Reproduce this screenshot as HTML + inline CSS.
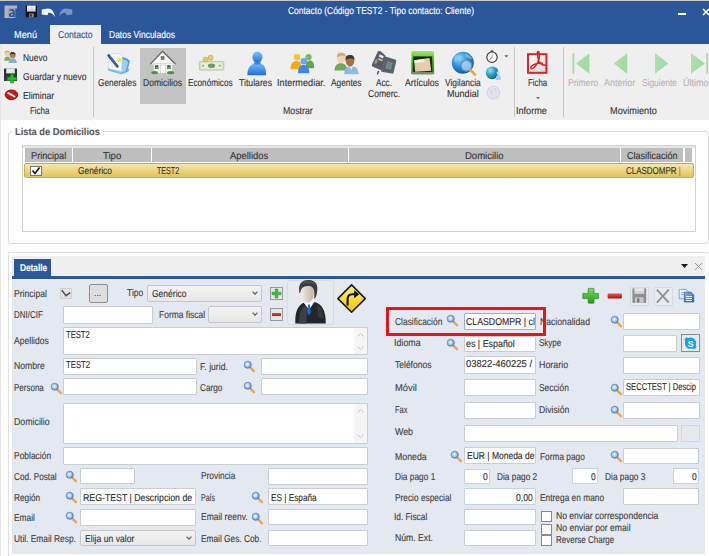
<!DOCTYPE html><html><head><meta charset="utf-8"><style>
html,body{margin:0;padding:0}
body{width:709px;height:556px;position:relative;overflow:hidden;background:#fff;font-family:'Liberation Sans',sans-serif}
.t{position:absolute;white-space:nowrap;line-height:10px;font-family:"Liberation Sans",sans-serif;transform-origin:0 0;-webkit-text-stroke:0.12px currentColor;text-rendering:geometricPrecision}
.b{position:absolute}
</style></head><body>
<div class="b" style="left:0px;top:0px;width:709px;height:1px;background:#c9c9c9"></div>
<div class="b" style="left:0px;top:1px;width:709px;height:43px;background:#2b579a"></div>
<svg class="b" style="left:0;top:0" width="80" height="24" viewBox="0 0 80 24">
<defs><linearGradient id="gFl" x1="0" y1="0" x2="0" y2="1"><stop offset="0" stop-color="#f4f4fc"/><stop offset="1" stop-color="#c8c8dc"/></linearGradient></defs>
<path d="M4.5 5.4 H17 V8.4 H8.8 V18.1 H4.5Z" fill="#b4b4b4"/>
<path d="M8.8 8.4 H15.2 V18.1 H8.8Z" fill="#b4b4b4"/>
<path d="M9.4 9.6 C10.6 8.6 13.6 8.6 14.4 10.2 C14.9 11.2 14.8 12.6 14.8 17.2 H12.6 V16.4 C11.8 17.4 9 17.6 8.9 15 C8.8 12.8 11 12.4 12.6 12.4 V11.6 C12.4 10.6 11 10.6 9.6 11.6Z" fill="#2b579a"/>
<path d="M11 14.9 C11 14 11.8 13.8 12.6 13.8 V15.2 C12.2 15.9 11 15.9 11 14.9Z" fill="#b4b4b4"/>
<rect x="25.7" y="5.4" width="11.3" height="11.9" rx="0.5" fill="#141414"/>
<rect x="27" y="5.6" width="8.6" height="6" fill="url(#gFl)"/>
<rect x="29.2" y="13.4" width="4.6" height="3.9" fill="#8a8a8a"/><rect x="30.2" y="13.8" width="1.6" height="3" fill="#303030"/>
<path d="M41.8 9.4 L47.6 8.4 C51.6 8.2 54.6 11.6 54.9 17.2 C53.4 14.2 51.2 12.6 48.2 12.8 L47.6 15.2 L41.7 14.6 Z" fill="#f4f4f4"/>
<path d="M72.2 9.4 L66.4 8.4 C62.4 8.2 59.6 11.6 59.3 16.2 C60.8 13.8 63 12.6 65.8 12.8 L66.4 15.2 L72.3 14.6 Z" fill="#7894c4"/>
</svg>
<div class="t" style="left:287.90px;top:7px;font-size:10px;color:#fff;font-weight:normal;transform:scaleX(0.8459);">Contacto (Código TEST2 - Tipo contacto: Cliente)</div>
<div class="b" style="left:678px;top:13px;width:8px;height:2px;background:#fff"></div>
<svg class="b" style="left:702px;top:8px" width="7" height="8" viewBox="0 0 7 8"><path d="M1 1L7 7M7 1L1 7" stroke="#fff" stroke-width="1.6"/></svg>
<div class="t" style="left:14.00px;top:31px;font-size:10px;color:#fff;font-weight:normal;transform:scaleX(0.9200);">Menú</div>
<div class="b" style="left:50px;top:25px;width:51px;height:19px;background:#efefef"></div>
<div class="t" style="left:58.30px;top:31px;font-size:10px;color:#2b579a;font-weight:normal;transform:scaleX(0.8625);">Contacto</div>
<div class="t" style="left:108.60px;top:31px;font-size:10px;color:#fff;font-weight:normal;transform:scaleX(0.8487);">Datos Vinculados</div>
<div class="b" style="left:0px;top:44px;width:709px;height:76px;background:#efefef"></div>
<div class="b" style="left:93px;top:47px;width:1px;height:70px;background:#c6c6c6"></div>
<div class="b" style="left:514px;top:47px;width:1px;height:70px;background:#c6c6c6"></div>
<div class="b" style="left:563px;top:47px;width:1px;height:70px;background:#c6c6c6"></div>
<div class="t" style="left:22.60px;top:54px;font-size:10px;color:#333;font-weight:normal;transform:scaleX(0.8414);">Nuevo</div>
<div class="t" style="left:22.60px;top:73px;font-size:10px;color:#333;font-weight:normal;transform:scaleX(0.8533);">Guardar y nuevo</div>
<div class="t" style="left:22.60px;top:92px;font-size:10px;color:#333;font-weight:normal;transform:scaleX(0.8639);">Eliminar</div>
<div class="t" style="left:29.60px;top:107px;font-size:10px;color:#333;font-weight:normal;transform:scaleX(0.7920);">Ficha</div>
<div class="b" style="left:140px;top:48px;width:46px;height:56px;background:#c3c3c3"></div>
<div class="t" style="left:97.80px;top:79px;font-size:10px;color:#333;font-weight:normal;transform:scaleX(0.8304);">Generales</div>
<div class="t" style="left:142.60px;top:79px;font-size:10px;color:#333;font-weight:normal;transform:scaleX(0.8565);">Domicilios</div>
<div class="t" style="left:188.00px;top:79px;font-size:10px;color:#333;font-weight:normal;transform:scaleX(0.8182);">Económicos</div>
<div class="t" style="left:239.00px;top:79px;font-size:10px;color:#333;font-weight:normal;transform:scaleX(0.8684);">Titulares</div>
<div class="t" style="left:277.08px;top:79px;font-size:10px;color:#333;font-weight:normal;transform:scaleX(0.9157);">Intermediar.</div>
<div class="t" style="left:330.70px;top:79px;font-size:10px;color:#333;font-weight:normal;transform:scaleX(0.8297);">Agentes</div>
<div class="t" style="left:375.90px;top:79px;font-size:10px;color:#333;font-weight:normal;transform:scaleX(0.8211);">Acc.</div>
<div class="t" style="left:367.80px;top:90px;font-size:10px;color:#333;font-weight:normal;transform:scaleX(0.8514);">Comerc.</div>
<div class="t" style="left:405.00px;top:79px;font-size:10px;color:#333;font-weight:normal;transform:scaleX(0.8718);">Artículos</div>
<div class="t" style="left:444.50px;top:79px;font-size:10px;color:#333;font-weight:normal;transform:scaleX(0.8372);">Vigilancia</div>
<div class="t" style="left:446.80px;top:90px;font-size:10px;color:#333;font-weight:normal;transform:scaleX(0.9057);">Mundial</div>
<div class="t" style="left:282.60px;top:107px;font-size:10px;color:#333;font-weight:normal;transform:scaleX(0.8765);">Mostrar</div>
<div class="t" style="left:527.50px;top:79px;font-size:10px;color:#333;font-weight:normal;transform:scaleX(0.7800);">Ficha</div>
<div class="t" style="left:516.09px;top:107px;font-size:10px;color:#333;font-weight:normal;transform:scaleX(0.9091);">Informe</div>
<div class="t" style="left:568.00px;top:79px;font-size:10px;color:#b5b5b5;font-weight:normal;transform:scaleX(0.8571);">Primero</div>
<div class="t" style="left:604.00px;top:79px;font-size:10px;color:#b5b5b5;font-weight:normal;transform:scaleX(0.8943);">Anterior</div>
<div class="t" style="left:641.80px;top:79px;font-size:10px;color:#b5b5b5;font-weight:normal;transform:scaleX(0.8381);">Siguiente</div>
<div class="t" style="left:683.00px;top:79px;font-size:10px;color:#b5b5b5;font-weight:normal;transform:scaleX(0.9000);">Último</div>
<div class="t" style="left:609.70px;top:107px;font-size:10px;color:#333;font-weight:normal;transform:scaleX(0.9157);">Movimiento</div>
<svg class="b" style="left:0;top:44px" width="709" height="76" viewBox="0 44 709 76">
<defs>
<linearGradient id="gBlue" x1="0" y1="0" x2="0" y2="1"><stop offset="0" stop-color="#7cc4fb"/><stop offset="1" stop-color="#1f6fd6"/></linearGradient>
<radialGradient id="gGlobe" cx="0.35" cy="0.3" r="0.8"><stop offset="0" stop-color="#8fd4ff"/><stop offset="0.5" stop-color="#2a8ad8"/><stop offset="1" stop-color="#0a4a9a"/></radialGradient>
<radialGradient id="gGlobe2" cx="0.35" cy="0.3" r="0.8"><stop offset="0" stop-color="#9ae0f0"/><stop offset="0.5" stop-color="#2a9ac0"/><stop offset="1" stop-color="#0a5a80"/></radialGradient>
<linearGradient id="gGreen" x1="0" y1="0" x2="0" y2="1"><stop offset="0" stop-color="#9be86a"/><stop offset="0.5" stop-color="#3cb41e"/><stop offset="1" stop-color="#1e8a0e"/></linearGradient>
<linearGradient id="gNav" x1="0" y1="0" x2="1" y2="0"><stop offset="0" stop-color="#b4dcb4"/><stop offset="1" stop-color="#9cdc9c"/></linearGradient>
<linearGradient id="gPdf" x1="0" y1="0" x2="1" y2="1"><stop offset="0" stop-color="#ffffff"/><stop offset="1" stop-color="#d8d8d8"/></linearGradient>
</defs>
<!-- Nuevo: two people -->
<path d="M4.2 60.8 C4.2 57.8 5.5 56.6 7.3 56.6 C9.1 56.6 10.6 57.8 10.6 60.8Z" fill="#74b25a"/>
<circle cx="7.3" cy="53.6" r="2.7" fill="#e9d3a6"/><path d="M4.6 53.4 C4.6 51 6 50.6 7.3 50.6 C9 50.6 10 51.4 10 53 C9 52 7 52 4.6 53.4Z" fill="#d2b56a"/>
<path d="M8.6 63 C8.6 59.6 10.3 58.4 12.7 58.4 C15.1 58.4 16.8 59.6 16.8 63Z" fill="#7fb0dc"/>
<circle cx="12.7" cy="55.4" r="2.9" fill="#b87a52"/><path d="M9.8 55 C9.8 52.6 11.3 52.1 12.7 52.1 C14.4 52.1 15.6 53 15.6 55 C14.5 53.8 11.5 53.8 9.8 55Z" fill="#3a3a3a"/>
<!-- Guardar y nuevo -->
<rect x="4" y="68.4" width="13" height="12.6" rx="0.6" fill="#2e3436"/>
<rect x="6.2" y="68.4" width="8.6" height="5" fill="#e4e8ec"/>
<rect x="6.5" y="76.5" width="6" height="4.5" fill="#4a5256"/>
<path d="M10.6 74.2H13.7V77.2H16.7V80.2H13.7V83H10.6V80.2H7.6V77.2H10.6Z" fill="#2cc02c" stroke="#138a13" stroke-width="0.6"/>
<!-- Eliminar -->
<ellipse cx="11.4" cy="94.8" rx="6.3" ry="4.9" fill="#c41a1a" stroke="#7a0c0c" stroke-width="0.8"/>
<path d="M7.6 92.6 L15.2 97" stroke="#f4e4e4" stroke-width="2"/>
<!-- Generales -->
<path d="M107.6 67.4 L121.6 71.4 L129.6 68.2 L128.6 71.6 L121.6 74.6 L108.4 70.8Z" fill="#7cbde8"/>
<path d="M121.2 56.6 L127.2 58.4 L130 61 L127 72 L121.4 72.6Z" fill="#5a9ee0"/>
<path d="M121.4 59 L126 60.2 L128.2 62.4 L125.6 71.6 L121.4 72Z" fill="#9ccff4"/>
<path d="M110.4 54 L119.2 53.4 L122.4 56.2 L121.6 71.8 L108 68.2 Z" fill="#f6f9fd" stroke="#b4cce6" stroke-width="0.5"/>
<path d="M117.4 57.8 L121.6 58.4 L121.2 62.4 L117 61.8Z" fill="#f0e848"/>
<path d="M108.6 55.4 L117.4 66.4" stroke="#2a5590" stroke-width="2.6" stroke-linecap="round"/>
<path d="M109.4 56 L116.8 65.4" stroke="#4a7ab8" stroke-width="0.8"/>
<!-- Domicilios house -->
<path d="M162.6 51.2 L175.6 64.4 L150.2 64.4Z" fill="#fafafa"/>
<path d="M150.2 64.2 L162.6 51.2 L175.6 64.2" fill="none" stroke="#6a6a6a" stroke-width="1.3"/>
<rect x="153.4" y="63.6" width="19.2" height="9.6" fill="#f4f4f4" stroke="#c0c0c0" stroke-width="0.5"/>
<rect x="160.8" y="56.2" width="3.6" height="3.6" fill="#5a6a5a"/><rect x="161.3" y="57.8" width="2.6" height="1.6" fill="#70b050"/>
<rect x="155" y="65.2" width="3.4" height="3.8" fill="#4a5a4a"/><rect x="155.4" y="67" width="2.6" height="1.6" fill="#6ab04a"/>
<rect x="167.2" y="65.2" width="3.4" height="3.8" fill="#4a5a4a"/><rect x="167.6" y="67" width="2.6" height="1.6" fill="#6ab04a"/>
<rect x="160.6" y="65" width="4.6" height="8.2" fill="#ffffff" stroke="#b8b8b8" stroke-width="0.5"/>
<ellipse cx="154.6" cy="72.6" rx="3.4" ry="1.7" fill="#3e9a2e"/><ellipse cx="170.6" cy="72.6" rx="3.6" ry="1.7" fill="#3e9a2e"/>
<!-- Economicos -->
<rect x="199.3" y="61.4" width="24.5" height="8.8" rx="0.8" fill="#d4e2c0" stroke="#a8b898" stroke-width="0.6"/>
<rect x="201" y="62.8" width="21" height="6" fill="#e6eedc"/>
<ellipse cx="211.5" cy="65.8" rx="3.6" ry="2.2" fill="#6e9a60"/>
<circle cx="203.2" cy="65.8" r="1" fill="#8aaa7a"/><circle cx="219.8" cy="65.8" r="1" fill="#8aaa7a"/>
<ellipse cx="205.4" cy="59.6" rx="2.5" ry="2.4" fill="#e2c660" stroke="#b89a3a" stroke-width="0.5"/>
<ellipse cx="210.6" cy="57.8" rx="2.5" ry="2.8" fill="#e8cc64" stroke="#b89a3a" stroke-width="0.5"/>
<!-- Titulares -->
<path d="M247.4 75.2 C247.2 69.4 249.6 65.4 253.8 63.6 L257.4 62.2 L260.8 63.6 C264.8 65.2 266.4 69.4 266.1 75.2Z" fill="url(#gBlue)"/>
<ellipse cx="257.4" cy="57.2" rx="5" ry="5.8" fill="url(#gBlue)"/>
<path d="M254.6 61.6 C255.8 63.4 258.8 63.4 260.2 61.6 L260.6 64.6 L254.2 64.6Z" fill="#3a86e4"/>
<!-- Intermediar -->
<path d="M290.6 69.2 C290.6 63.6 293 61 296.3 61 C299.6 61 302 63.6 302 69.2Z" fill="#f7a81a"/>
<circle cx="297" cy="57.3" r="3.3" fill="#fbc230"/>
<path d="M305.5 68.2 C305.5 63 307.6 60.6 310 60.6 C312.6 60.6 314.2 63 314.2 68.2Z" fill="#62a83e"/>
<circle cx="308.6" cy="57.1" r="3.1" fill="#7cbc50"/>
<path d="M298 73.2 C298 67.4 300.2 64.9 303.6 64.9 C307 64.9 309.4 67.4 309.4 73.2Z" fill="#3e8ae6"/>
<circle cx="303.8" cy="61.3" r="3.3" fill="#62a8f2"/>
<!-- Agentes -->
<path d="M334.6 70.4 C334.6 65.4 337 63.2 340.8 63.2 C344.6 63.2 347.2 65.4 347.2 70.4Z" fill="#72a858"/>
<ellipse cx="341.4" cy="58" rx="4.4" ry="5" fill="#eed6b2"/><path d="M337 57.6 C336.6 53.8 338.6 52.8 341.4 52.8 C344.4 52.8 346 54 345.8 57 C344 55.2 339.6 55.2 337 57.6Z" fill="#c8b078"/>
<path d="M344.2 74.2 C344.2 68.6 346.6 66.2 351.3 66.2 C356 66.2 358.5 68.6 358.5 74.2Z" fill="#8cbce4"/>
<path d="M349.6 66.4 L351.3 70 L353 66.4Z" fill="#f0f0f0"/>
<ellipse cx="350" cy="60.8" rx="4.3" ry="5.6" fill="#a86e46"/><path d="M345.6 60.4 C345.2 56 347.2 55 350 55 C353.2 55 354.6 56.4 354.4 60 C353 58 348 58 345.6 60.4Z" fill="#3a3a3a"/>
<!-- Acc. Comerc. -->
<path d="M378 51.2 C379 50.8 380 51 381 51.6 L385.4 55.6 L384.4 71.6 L372.8 66.8 C371.8 66.2 371.6 65.6 371.9 64.6 Z" fill="#5a5a6a"/>
<path d="M384.4 56.2 L395.2 59.6 C396.2 60 396.4 60.6 396.2 61.6 L393.6 72.8 C393.4 73.6 392.8 73.8 392 73.6 L381.2 71.8 Z" fill="#60606e"/>
<path d="M386.8 60.4 L393.4 62.4 L391.4 70.6 L384.8 68.8 Z" fill="#6e8a82" stroke="#46465a" stroke-width="0.5"/>
<path d="M379.8 54.2 L383.8 56.2 L382.8 58.4 L378.8 56.4Z" fill="#e6ecf6"/>
<path d="M378.8 58 L382.8 60 L382 61.6 L378 59.6Z" fill="#dcc460"/>
<path d="M375 60.2 L377.8 58.6 L377 63 L374.4 64.2 Z" fill="#b8b8a8" opacity="0.7"/>
<path d="M378.6 71 L377.4 74.4" stroke="#3a3a48" stroke-width="1.3"/>
<!-- Articulos -->
<rect x="411.3" y="51" width="22.8" height="23.2" rx="2" fill="url(#gGreen)"/>
<rect x="413.2" y="56.4" width="19" height="15.6" fill="#1e2a18"/>
<path d="M414.2 60.2 L429.5 58 L431.2 70.8 L415.2 71.8Z" fill="#e6ccaa"/>
<path d="M414.2 60.2 L424 59 L424.5 62 L414.6 63Z" fill="#f4f0ea"/>
<rect x="411.3" y="72" width="22.8" height="2.2" fill="#7a8a7a"/>
<!-- Vigilancia globe -->
<circle cx="462.8" cy="62.8" r="11" fill="url(#gGlobe)"/>
<path d="M455 56 C458 54 461 55 462 57 C460 59 457 60 455.5 62 C454 60 454 58 455 56Z" fill="#8ad0f8" opacity="0.7"/>
<path d="M465 53.5 C468 54 471 56 472.5 59 C470 59 467 58 465 56Z" fill="#8ad0f8" opacity="0.6"/>
<circle cx="466.4" cy="65.8" r="5.4" fill="#b4e0fb" fill-opacity="0.75" stroke="#7a86a8" stroke-width="1.2"/>
<path d="M470.4 69.8 L475 74.6" stroke="#e6a832" stroke-width="2.6" stroke-linecap="round"/>
<!-- stopwatch -->
<rect x="490.6" y="50.4" width="2.8" height="1.8" fill="#444"/>
<circle cx="492" cy="57.2" r="5.2" fill="#fcfcfc" stroke="#404040" stroke-width="1.2"/>
<path d="M492 57.2 L489.6 59.8" stroke="#e03030" stroke-width="1"/>
<path d="M492 57.2 L493.2 54" stroke="#888" stroke-width="0.6"/>
<path d="M504.3 55.2 H508.3 L506.3 57.4Z" fill="#606060"/>
<!-- globe2 -->
<circle cx="492.2" cy="72.8" r="6.4" fill="url(#gGlobe2)"/>
<path d="M495.8 80 C495.6 76.6 496.5 75 498.4 75 C500.2 75 501 76.6 500.8 80Z" fill="#9ccdf2"/>
<circle cx="498.3" cy="73" r="1.7" fill="#b4dcf8"/>
<!-- globe3 faded -->
<circle cx="493.3" cy="92.6" r="6.4" fill="#e2e2f2" stroke="#c8c8de" stroke-width="0.8"/>
<path d="M489 89 C491 90 492 92 491.5 95 M495 88 C494.5 90 496 92 497.5 92" stroke="#c8c8e0" stroke-width="0.8" fill="none"/>
<!-- PDF -->
<rect x="528" y="54.2" width="18.4" height="18.6" fill="url(#gPdf)" stroke="#e02424" stroke-width="2"/>
<path d="M538.2 51.6 C536.6 54 537.6 57.6 539.2 61.4 C540.6 64.4 543.6 65.6 546.6 65.2 M538.2 52.2 C540 55 539.6 59 537.6 62.6 C535.6 66 533 68.8 531.4 68.4 C530.2 68 531 66.2 533.8 64.6 C536.6 63 540 62.6 543 63.2" fill="none" stroke="#e02020" stroke-width="1.5"/>
<circle cx="538.2" cy="52.2" r="1.4" fill="#e02020"/>
<path d="M536 97 H540 L538 99.2Z" fill="#707070"/>
<!-- nav -->
<rect x="572.5" y="53.3" width="1.8" height="20.4" fill="#a8d6a8"/>
<path d="M576 63.5 L589.4 53.3 V73.7Z" fill="url(#gNav)"/>
<path d="M613.8 63.5 L627.2 53.3 V73.7Z" fill="url(#gNav)"/>
<path d="M668.4 63.5 L655 53.3 V73.7Z" fill="url(#gNav)"/>
<path d="M705 63.5 L691 53.3 V73.7Z" fill="url(#gNav)"/>
<rect x="706.3" y="53.3" width="1.8" height="20.4" fill="#a8d6a8"/>
</svg>
<div class="b" style="left:0px;top:44px;width:1px;height:512px;background:#e6e6e6"></div>
<div class="b" style="left:8px;top:131px;width:701px;height:113px;border:1px solid #dadada;border-radius:3px;box-sizing:border-box"></div>
<div class="b" style="left:12px;top:126px;width:91px;height:12px;background:#fff"></div>
<div class="t" style="left:14.90px;top:128px;font-size:10px;color:#585858;font-weight:bold;transform:scaleX(0.9308);">Lista de Domicilios</div>
<div class="b" style="left:22px;top:145px;width:674px;height:87px;border:1px solid #d2d2d2;box-sizing:border-box;background:#fff"></div>
<div class="b" style="left:23px;top:146px;width:672px;height:2px;background:#e6e6e6"></div>
<div class="b" style="left:25px;top:148px;width:47px;height:14px;background:#bebebe"></div>
<div class="b" style="left:73px;top:148px;width:78px;height:14px;background:#bebebe"></div>
<div class="b" style="left:152px;top:148px;width:196px;height:14px;background:#bebebe"></div>
<div class="b" style="left:349px;top:148px;width:271px;height:14px;background:#bebebe"></div>
<div class="b" style="left:621px;top:148px;width:62px;height:14px;background:#bebebe"></div>
<div class="b" style="left:685px;top:148px;width:7px;height:14px;background:#bebebe"></div>
<div class="t" style="left:30.90px;top:152px;font-size:10px;color:#333;font-weight:normal;transform:scaleX(0.9184)">Principal</div>
<div class="t" style="left:102.60px;top:152px;font-size:10px;color:#333;font-weight:normal;transform:scaleX(0.9579)">Tipo</div>
<div class="t" style="left:230.40px;top:152px;font-size:10px;color:#333;font-weight:normal;transform:scaleX(0.9415)">Apellidos</div>
<div class="t" style="left:465.00px;top:152px;font-size:10px;color:#333;font-weight:normal;transform:scaleX(0.9512)">Domicilio</div>
<div class="t" style="left:626.50px;top:152px;font-size:10px;color:#333;font-weight:normal;transform:scaleX(0.9018)">Clasificación</div>
<div class="b" style="left:24px;top:163px;width:670px;height:15px;background:linear-gradient(#f4e6b0,#ecd788 45%,#e0c25c);border:1px solid #c9ab48;border-radius:2px;box-sizing:border-box"></div>
<div class="b" style="left:30px;top:166px;width:12px;height:10px;background:#fff;border:1px solid #7a7a7a;box-sizing:border-box"></div>
<svg class="b" style="left:31px;top:166px" width="10" height="9" viewBox="0 0 10 9"><path d="M1.5 4.5 L4 7.5 L8.5 1.5" fill="none" stroke="#111" stroke-width="1.6"/></svg>
<div class="t" style="left:77.70px;top:167px;font-size:10px;color:#3a3020;font-weight:normal;transform:scaleX(0.8341);">Genérico</div>
<div class="t" style="left:157.00px;top:167px;font-size:10px;color:#3a3020;font-weight:normal;transform:scaleX(0.7097);">TEST2</div>
<div class="t" style="left:625.80px;top:167px;font-size:10px;color:#3a3020;font-weight:normal;transform:scaleX(0.7971);">CLASDOMPR <span style="color:#c8602a">|</span></div>
<div class="b" style="left:8px;top:252px;width:702px;height:318px;border:1px solid #e0e0e0;border-radius:3px;box-sizing:border-box;background:#fff"></div>
<div class="b" style="left:12px;top:256px;width:693px;height:20px;background:#efefef"></div>
<div class="b" style="left:14px;top:259px;width:37px;height:17px;background:#2b579a"></div>
<div class="t" style="left:19.90px;top:264px;font-size:10px;color:#fff;font-weight:bold;transform:scaleX(0.8273);">Detalle</div>
<svg class="b" style="left:681px;top:264px" width="7" height="4" viewBox="0 0 7 4"><path d="M0 0H7L3.5 4Z" fill="#111"/></svg>
<svg class="b" style="left:694px;top:262px" width="9" height="9" viewBox="0 0 9 9"><path d="M1 1L8 8M8 1L1 8" stroke="#9a9a9a" stroke-width="1"/></svg>
<div class="b" style="left:12px;top:276px;width:693px;height:3px;background:#2b579a"></div>
<div class="b" style="left:12px;top:279px;width:693px;height:275px;background:#e4e8f1"></div>
<div class="t" style="left:14.00px;top:290px;font-size:10px;color:#404040;font-weight:normal;transform:scaleX(0.8579);">Principal</div>
<div class="b" style="left:60px;top:288px;width:12px;height:11px;background:#e4e4e4;border:1px solid #d0d0d0;box-sizing:border-box;border-radius:1px"></div>
<svg class="b" style="left:60px;top:288px" width="12" height="11" viewBox="0 0 12 11"><path d="M1.8 2.2 L6 7.6 L10.2 4.6" fill="none" stroke="#505050" stroke-width="1.5"/></svg>
<div class="b" style="left:89px;top:284px;width:19px;height:19px;background:#dedede;border:1.5px solid #8e8e8e;border-radius:2px;box-sizing:border-box"></div>
<div class="t" style="left:94.13px;top:289px;font-size:10px;color:#445;font-weight:normal;transform:scaleX(0.8700);">...</div>
<div class="t" style="left:127.40px;top:289px;font-size:10px;color:#404040;font-weight:normal;transform:scaleX(0.8526);">Tipo</div>
<div class="b" style="left:147px;top:285px;width:115px;height:17px;background:linear-gradient(#f3f3f3,#e7e7e7);border:1px solid #c6c6c6;box-sizing:border-box;border-radius:2px"></div>
<div class="t" style="left:151.90px;top:290px;font-size:10px;color:#333;font-weight:normal;transform:scaleX(0.8512);">Genérico</div>
<svg class="b" style="left:252px;top:291px" width="6" height="4" viewBox="0 0 6 4"><path d="M0.6 0.6 L3 3.2 L5.4 0.6" fill="none" stroke="#606060" stroke-width="1.2"/></svg>
<div class="b" style="left:270px;top:287px;width:13px;height:13px;background:#e6e6e6;border:1px solid #9a9a9a;box-sizing:border-box"></div>
<svg class="b" style="left:270px;top:287px" width="13" height="13" viewBox="0 0 13 13"><path d="M5.2 2 H7.8 V5.2 H11 V7.8 H7.8 V11 H5.2 V7.8 H2 V5.2 H5.2Z" fill="#3cc03c" stroke="#1e8e1e" stroke-width="0.5"/></svg>
<div class="b" style="left:270px;top:308px;width:13px;height:13px;background:#e6e6e6;border:1px solid #9a9a9a;box-sizing:border-box"></div>
<div class="b" style="left:272px;top:313px;width:9px;height:3px;background:linear-gradient(#f04040,#b81818)"></div>
<div class="b" style="left:287px;top:280px;width:47px;height:45px;background:#e6e9ee;border:1px solid #d8dbe0;border-radius:3px;box-sizing:border-box"></div>
<svg class="b" style="left:280px;top:278px" width="90" height="50" viewBox="280 278 90 50">
<defs><linearGradient id="gFace" x1="0" y1="0" x2="1" y2="0"><stop offset="0" stop-color="#f4ece4"/><stop offset="1" stop-color="#c4b4a4"/></linearGradient>
<linearGradient id="gYel" x1="0" y1="0" x2="0" y2="1"><stop offset="0" stop-color="#fff27a"/><stop offset="1" stop-color="#efc400"/></linearGradient></defs>
<path d="M295.3 323.4 C295 312 297.5 306 303.5 302.8 L309 306.5 L314.8 302 C321.5 304 326 310 325.8 323.4Z" fill="#23272c"/>
<path d="M299 323.4 C299 314 301 308 305 305.5 L307.5 309 L306 323.4Z" fill="#3c4148"/>
<path d="M317 304.5 C321 307 323 312 323.5 318 L318 318 Z" fill="#343940"/>
<path d="M303.6 302.2 L309 310 L314.6 301.4 L313 299.5 L309 303.6 L305.2 299.6Z" fill="#f6f6f6"/>
<path d="M308.1 304.4 H309.9 L310.8 312.4 L309 315.4 L307.3 312.4Z" fill="#1c6cd2"/>
<ellipse cx="307.2" cy="293.2" rx="6.6" ry="9.6" fill="url(#gFace)"/>
<path d="M299.6 293.5 C297.6 284.5 301.5 280 308.6 280.1 C315.6 280.3 318.6 284.6 317 292.5 C316.5 296 315.5 298.5 314.2 298.8 C314.8 292.5 314.3 288 311.2 286.4 C307.5 285.6 303 286.2 301.2 289.2 C300.6 291 300.5 292.6 299.6 293.5Z" fill="#3a3e44"/>
<path d="M303 283.5 C306 281.5 311 281.5 314 283.5" stroke="#5a6068" stroke-width="1" fill="none"/>
<path d="M351.6 284.9 L365.3 298.6 L351.6 312.3 L337.9 298.6Z" fill="url(#gYel)" stroke="#161616" stroke-width="1.5" stroke-linejoin="round"/>
<path d="M347.6 305.5 V299.2 C347.6 296.2 349.2 294.2 352.4 294.2 H355" fill="none" stroke="#111" stroke-width="2.1"/>
<path d="M354.2 290.2 L359.2 294.2 L354.2 298.2Z" fill="#111"/>
</svg>
<div class="t" style="left:13.80px;top:311px;font-size:10px;color:#404040;font-weight:normal;transform:scaleX(0.7972);">DNI/CIF</div>
<div class="b" style="left:63px;top:306px;width:90px;height:18px;background:#fff;border:1px solid #c9cdd3;box-sizing:border-box;overflow:hidden;border-radius:1px">
</div>
<div class="t" style="left:159.40px;top:311px;font-size:10px;color:#404040;font-weight:normal;transform:scaleX(0.8481);">Forma fiscal</div>
<div class="b" style="left:208px;top:306px;width:54px;height:17px;background:linear-gradient(#f3f3f3,#e7e7e7);border:1px solid #c6c6c6;box-sizing:border-box;border-radius:2px"></div>
<svg class="b" style="left:252px;top:312px" width="6" height="4" viewBox="0 0 6 4"><path d="M0.6 0.6 L3 3.2 L5.4 0.6" fill="none" stroke="#606060" stroke-width="1.2"/></svg>
<div class="t" style="left:13.80px;top:337px;font-size:10px;color:#404040;font-weight:normal;transform:scaleX(0.8585);">Apellidos</div>
<div class="b" style="left:63px;top:327px;width:305px;height:28px;background:#fff;border:1px solid #c9cdd3;box-sizing:border-box;overflow:hidden;border-radius:1px">
<div class="t" style="left:2.00px;top:3px;font-size:10px;color:#2a2a2a;font-weight:normal;transform:scaleX(0.7645);">TEST2</div>
</div>
<div class="b" style="left:354px;top:328px;width:13px;height:26px;background:#f5f5f5"></div>
<svg class="b" style="left:357px;top:333px" width="7" height="4" viewBox="0 0 7 4"><path d="M0.5 3.5L3.5 0.5L6.5 3.5" fill="none" stroke="#c4c4c4" stroke-width="1"/></svg>
<svg class="b" style="left:357px;top:346px" width="7" height="4" viewBox="0 0 7 4"><path d="M0.5 0.5L3.5 3.5L6.5 0.5" fill="none" stroke="#c4c4c4" stroke-width="1"/></svg>
<div class="t" style="left:13.80px;top:362px;font-size:10px;color:#404040;font-weight:normal;transform:scaleX(0.8667);">Nombre</div>
<div class="b" style="left:63px;top:358px;width:134px;height:17px;background:#fff;border:1px solid #c9cdd3;box-sizing:border-box;overflow:hidden;border-radius:1px">
<div class="t" style="left:2.00px;top:2px;font-size:10px;color:#2a2a2a;font-weight:normal;transform:scaleX(0.7742);">TEST2</div>
</div>
<div class="t" style="left:200.40px;top:363px;font-size:10px;color:#404040;font-weight:normal;transform:scaleX(0.8656);">F. jurid.</div>
<svg class="b" style="left:243.2px;top:360.4px" width="14" height="14" viewBox="243.2 360.4 14 14"><defs><radialGradient id="gm244361" cx="0.45" cy="0.45" r="0.6"><stop offset="0" stop-color="#ffffff"/><stop offset="0.45" stop-color="#a8d0f4"/><stop offset="1" stop-color="#3a6cc4"/></radialGradient></defs><path d="M250.79999999999998 368.29999999999995 L254.1 371.5" stroke="#e8aa48" stroke-width="2.5" stroke-linecap="round"/><circle cx="247.95" cy="365.15" r="3.6" fill="url(#gm244361)" stroke="#5878b0" stroke-width="0.6"/></svg>
<div class="b" style="left:261px;top:358px;width:107px;height:17px;background:#fff;border:1px solid #c9cdd3;box-sizing:border-box;overflow:hidden;border-radius:1px">
</div>
<div class="t" style="left:13.80px;top:384px;font-size:10px;color:#404040;font-weight:normal;transform:scaleX(0.8000);">Persona</div>
<svg class="b" style="left:49.8px;top:381.5px" width="14" height="14" viewBox="49.8 381.5 14 14"><defs><radialGradient id="gm50382" cx="0.45" cy="0.45" r="0.6"><stop offset="0" stop-color="#ffffff"/><stop offset="0.45" stop-color="#a8d0f4"/><stop offset="1" stop-color="#3a6cc4"/></radialGradient></defs><path d="M57.4 389.4 L60.699999999999996 392.6" stroke="#e8aa48" stroke-width="2.5" stroke-linecap="round"/><circle cx="54.55" cy="386.25" r="3.6" fill="url(#gm50382)" stroke="#5878b0" stroke-width="0.6"/></svg>
<div class="b" style="left:63px;top:378px;width:134px;height:17px;background:#fff;border:1px solid #c9cdd3;box-sizing:border-box;overflow:hidden;border-radius:1px">
</div>
<div class="t" style="left:200.40px;top:384px;font-size:10px;color:#404040;font-weight:normal;transform:scaleX(0.8222);">Cargo</div>
<svg class="b" style="left:243.2px;top:380.7px" width="14" height="14" viewBox="243.2 380.7 14 14"><defs><radialGradient id="gm244381" cx="0.45" cy="0.45" r="0.6"><stop offset="0" stop-color="#ffffff"/><stop offset="0.45" stop-color="#a8d0f4"/><stop offset="1" stop-color="#3a6cc4"/></radialGradient></defs><path d="M250.79999999999998 388.59999999999997 L254.1 391.8" stroke="#e8aa48" stroke-width="2.5" stroke-linecap="round"/><circle cx="247.95" cy="385.45" r="3.6" fill="url(#gm244381)" stroke="#5878b0" stroke-width="0.6"/></svg>
<div class="b" style="left:261px;top:378px;width:107px;height:17px;background:#fff;border:1px solid #c9cdd3;box-sizing:border-box;overflow:hidden;border-radius:1px">
</div>
<div class="t" style="left:13.80px;top:418px;font-size:10px;color:#404040;font-weight:normal;transform:scaleX(0.8780);">Domicilio</div>
<div class="b" style="left:63px;top:403px;width:305px;height:41px;background:#fff;border:1px solid #c9cdd3;box-sizing:border-box;overflow:hidden;border-radius:1px">
</div>
<div class="b" style="left:354px;top:404px;width:13px;height:39px;background:#f5f5f5"></div>
<svg class="b" style="left:357px;top:409px" width="7" height="4" viewBox="0 0 7 4"><path d="M0.5 3.5L3.5 0.5L6.5 3.5" fill="none" stroke="#c4c4c4" stroke-width="1"/></svg>
<svg class="b" style="left:357px;top:434px" width="7" height="4" viewBox="0 0 7 4"><path d="M0.5 0.5L3.5 3.5L6.5 0.5" fill="none" stroke="#c4c4c4" stroke-width="1"/></svg>
<div class="t" style="left:13.80px;top:452px;font-size:10px;color:#404040;font-weight:normal;transform:scaleX(0.8455);">Población</div>
<div class="b" style="left:63px;top:447px;width:305px;height:18px;background:#fff;border:1px solid #c9cdd3;box-sizing:border-box;overflow:hidden;border-radius:1px">
</div>
<div class="t" style="left:13.80px;top:473px;font-size:10px;color:#404040;font-weight:normal;transform:scaleX(0.8231);">Cod. Postal</div>
<svg class="b" style="left:65.2px;top:470.4px" width="14" height="14" viewBox="65.2 470.4 14 14"><defs><radialGradient id="gm66471" cx="0.45" cy="0.45" r="0.6"><stop offset="0" stop-color="#ffffff"/><stop offset="0.45" stop-color="#a8d0f4"/><stop offset="1" stop-color="#3a6cc4"/></radialGradient></defs><path d="M72.8 478.29999999999995 L76.10000000000001 481.5" stroke="#e8aa48" stroke-width="2.5" stroke-linecap="round"/><circle cx="69.95" cy="475.15" r="3.6" fill="url(#gm66471)" stroke="#5878b0" stroke-width="0.6"/></svg>
<div class="b" style="left:80px;top:468px;width:55px;height:16px;background:#fff;border:1px solid #c9cdd3;box-sizing:border-box;overflow:hidden;border-radius:1px">
</div>
<div class="t" style="left:200.80px;top:472px;font-size:10px;color:#404040;font-weight:normal;transform:scaleX(0.8341);">Provincia</div>
<div class="b" style="left:268px;top:468px;width:100px;height:17px;background:#fff;border:1px solid #c9cdd3;box-sizing:border-box;overflow:hidden;border-radius:1px">
</div>
<div class="t" style="left:13.80px;top:494px;font-size:10px;color:#404040;font-weight:normal;transform:scaleX(0.8250);">Región</div>
<svg class="b" style="left:65.2px;top:490.9px" width="14" height="14" viewBox="65.2 490.9 14 14"><defs><radialGradient id="gm66491" cx="0.45" cy="0.45" r="0.6"><stop offset="0" stop-color="#ffffff"/><stop offset="0.45" stop-color="#a8d0f4"/><stop offset="1" stop-color="#3a6cc4"/></radialGradient></defs><path d="M72.8 498.79999999999995 L76.10000000000001 502.0" stroke="#e8aa48" stroke-width="2.5" stroke-linecap="round"/><circle cx="69.95" cy="495.65" r="3.6" fill="url(#gm66491)" stroke="#5878b0" stroke-width="0.6"/></svg>
<div class="b" style="left:80px;top:488px;width:116px;height:17px;background:#fff;border:1px solid #c9cdd3;box-sizing:border-box;overflow:hidden;border-radius:1px">
<div class="t" style="left:1.60px;top:5px;font-size:10px;color:#2a2a2a;font-weight:normal;transform:scaleX(0.8752);">REG-TEST | Descripcion de</div>
</div>
<div class="t" style="left:200.80px;top:494px;font-size:10px;color:#404040;font-weight:normal;transform:scaleX(0.7050);">País</div>
<svg class="b" style="left:251.2px;top:491px" width="14" height="14" viewBox="251.2 491 14 14"><defs><radialGradient id="gm252492" cx="0.45" cy="0.45" r="0.6"><stop offset="0" stop-color="#ffffff"/><stop offset="0.45" stop-color="#a8d0f4"/><stop offset="1" stop-color="#3a6cc4"/></radialGradient></defs><path d="M258.8 498.9 L262.09999999999997 502.1" stroke="#e8aa48" stroke-width="2.5" stroke-linecap="round"/><circle cx="255.95" cy="495.75" r="3.6" fill="url(#gm252492)" stroke="#5878b0" stroke-width="0.6"/></svg>
<div class="b" style="left:268px;top:488px;width:100px;height:17px;background:#fff;border:1px solid #c9cdd3;box-sizing:border-box;overflow:hidden;border-radius:1px">
<div class="t" style="left:1.90px;top:5px;font-size:10px;color:#2a2a2a;font-weight:normal;transform:scaleX(0.8232);">ES | España</div>
</div>
<div class="t" style="left:13.80px;top:514px;font-size:10px;color:#404040;font-weight:normal;transform:scaleX(0.8360);">Email</div>
<svg class="b" style="left:65.2px;top:511.4px" width="14" height="14" viewBox="65.2 511.4 14 14"><defs><radialGradient id="gm66512" cx="0.45" cy="0.45" r="0.6"><stop offset="0" stop-color="#ffffff"/><stop offset="0.45" stop-color="#a8d0f4"/><stop offset="1" stop-color="#3a6cc4"/></radialGradient></defs><path d="M72.8 519.3 L76.10000000000001 522.5" stroke="#e8aa48" stroke-width="2.5" stroke-linecap="round"/><circle cx="69.95" cy="516.15" r="3.6" fill="url(#gm66512)" stroke="#5878b0" stroke-width="0.6"/></svg>
<div class="b" style="left:80px;top:509px;width:116px;height:17px;background:#fff;border:1px solid #c9cdd3;box-sizing:border-box;overflow:hidden;border-radius:1px">
</div>
<div class="t" style="left:200.80px;top:513px;font-size:10px;color:#404040;font-weight:normal;transform:scaleX(0.8500);">Email reenv.</div>
<svg class="b" style="left:251.2px;top:511.6px" width="14" height="14" viewBox="251.2 511.6 14 14"><defs><radialGradient id="gm252512" cx="0.45" cy="0.45" r="0.6"><stop offset="0" stop-color="#ffffff"/><stop offset="0.45" stop-color="#a8d0f4"/><stop offset="1" stop-color="#3a6cc4"/></radialGradient></defs><path d="M258.8 519.5 L262.09999999999997 522.7" stroke="#e8aa48" stroke-width="2.5" stroke-linecap="round"/><circle cx="255.95" cy="516.35" r="3.6" fill="url(#gm252512)" stroke="#5878b0" stroke-width="0.6"/></svg>
<div class="b" style="left:268px;top:509px;width:100px;height:16px;background:#fff;border:1px solid #c9cdd3;box-sizing:border-box;overflow:hidden;border-radius:1px">
</div>
<div class="t" style="left:13.80px;top:535px;font-size:10px;color:#404040;font-weight:normal;transform:scaleX(0.8378);">Util. Email Resp.</div>
<div class="b" style="left:80px;top:530px;width:116px;height:16px;background:linear-gradient(#f3f3f3,#e7e7e7);border:1px solid #c6c6c6;box-sizing:border-box;border-radius:2px"></div>
<div class="t" style="left:84.80px;top:535px;font-size:10px;color:#333;font-weight:normal;transform:scaleX(0.8632);">Elija un valor</div>
<svg class="b" style="left:186px;top:536px" width="6" height="4" viewBox="0 0 6 4"><path d="M0.6 0.6 L3 3.2 L5.4 0.6" fill="none" stroke="#606060" stroke-width="1.2"/></svg>
<div class="t" style="left:200.50px;top:535px;font-size:10px;color:#404040;font-weight:normal;transform:scaleX(0.8306);">Email Ges. Cob.</div>
<div class="b" style="left:268px;top:530px;width:100px;height:16px;background:#fff;border:1px solid #c9cdd3;box-sizing:border-box;overflow:hidden;border-radius:1px">
</div>
<svg class="b" style="left:575px;top:282px" width="130" height="26" viewBox="575 282 130 26">
<defs><linearGradient id="gPl" x1="0" y1="0" x2="0" y2="1"><stop offset="0" stop-color="#7ee05a"/><stop offset="1" stop-color="#1e9a1e"/></linearGradient>
<linearGradient id="gMi" x1="0" y1="0" x2="0" y2="1"><stop offset="0" stop-color="#f05050"/><stop offset="1" stop-color="#b01010"/></linearGradient>
<linearGradient id="gPg" x1="0" y1="0" x2="1" y2="1"><stop offset="0" stop-color="#ffffff"/><stop offset="1" stop-color="#b8d0f0"/></linearGradient>
<linearGradient id="gPg2" x1="0" y1="0" x2="1" y2="1"><stop offset="0" stop-color="#8ab4ec"/><stop offset="1" stop-color="#2a5cb0"/></linearGradient></defs>
<path d="M588.6 288.4 H593.6 Q594 288.4 594 288.8 V293.4 H598.2 Q598.6 293.4 598.6 293.8 V298.2 Q598.6 298.6 598.2 298.6 H594 V302.8 Q594 303.2 593.6 303.2 H588.6 Q588.2 303.2 588.2 302.8 V298.6 H583.2 Q582.8 298.6 582.8 298.2 V293.8 Q582.8 293.4 583.2 293.4 H588.2 V288.8 Q588.2 288.4 588.6 288.4Z" fill="url(#gPl)" stroke="#1a7a1a" stroke-width="0.6"/>
<rect x="607.6" y="293.6" width="14.3" height="4.8" rx="1" fill="url(#gMi)"/>
<path d="M679.2 289.4 H686 L688.8 292 V298.8 H679.2Z" fill="url(#gPg)" stroke="#5a88c8" stroke-width="0.7"/>
<path d="M684.4 292.3 H691 L693.8 295 V302 H684.4Z" fill="url(#gPg2)" stroke="#2a58a8" stroke-width="0.7"/>
<path d="M681 292.5 H685 M681 294.5 H684" stroke="#6a98d8" stroke-width="0.7"/><path d="M686 296.5 H692 M686 298.5 H692 M686 300.5 H692" stroke="#e8f0fc" stroke-width="1"/>
</svg>
<div class="b" style="left:630px;top:287px;width:19px;height:19px;background:#e8ebf0;border:1px solid #d6d9df;box-sizing:border-box;border-radius:1px"></div>
<div class="b" style="left:654px;top:287px;width:19px;height:19px;background:#e8ebf0;border:1px solid #d6d9df;box-sizing:border-box;border-radius:1px"></div>
<svg class="b" style="left:630px;top:286px" width="45" height="20" viewBox="630 286 45 20"><defs><linearGradient id="gSv" x1="0" y1="0" x2="0" y2="1"><stop offset="0" stop-color="#f4f4f4"/><stop offset="1" stop-color="#c4c4c4"/></linearGradient></defs><rect x="632.4" y="288.3" width="13.8" height="14.6" rx="0.8" fill="#8e8e8e"/><rect x="634.4" y="288.3" width="9.8" height="5.8" fill="url(#gSv)"/><rect x="635" y="297.4" width="8.6" height="5.5" fill="#c8c8c8"/><rect x="637" y="298.4" width="2.4" height="4" fill="#7a7a7a"/><path d="M656.8 289.6 L668.8 302.6 M668.8 289.6 L656.8 302.6" stroke="#8e8e8e" stroke-width="1.7"/></svg>
<div class="t" style="left:395.00px;top:318px;font-size:10px;color:#404040;font-weight:normal;transform:scaleX(0.8429);">Clasificación</div>
<svg class="b" style="left:446.3px;top:314px" width="14" height="14" viewBox="446.3 314 14 14"><defs><radialGradient id="gm447315" cx="0.45" cy="0.45" r="0.6"><stop offset="0" stop-color="#ffffff"/><stop offset="0.45" stop-color="#a8d0f4"/><stop offset="1" stop-color="#3a6cc4"/></radialGradient></defs><path d="M453.90000000000003 321.9 L457.2 325.1" stroke="#e8aa48" stroke-width="2.5" stroke-linecap="round"/><circle cx="451.05" cy="318.75" r="3.6" fill="url(#gm447315)" stroke="#5878b0" stroke-width="0.6"/></svg>
<div class="b" style="left:464px;top:313px;width:72px;height:17px;background:#fff;border:1px solid #8fb4e0;box-sizing:border-box;overflow:hidden;border-radius:1px">
<div class="t" style="left:1.30px;top:4px;font-size:10px;color:#2a2a2a;font-weight:normal;transform:scaleX(0.8746);">CLASDOMPR | cl</div>
</div>
<div class="t" style="left:539.60px;top:318px;font-size:10px;color:#404040;font-weight:normal;transform:scaleX(0.8638);">Nacionalidad</div>
<svg class="b" style="left:609.8px;top:315px" width="14" height="14" viewBox="609.8 315 14 14"><defs><radialGradient id="gm610316" cx="0.45" cy="0.45" r="0.6"><stop offset="0" stop-color="#ffffff"/><stop offset="0.45" stop-color="#a8d0f4"/><stop offset="1" stop-color="#3a6cc4"/></radialGradient></defs><path d="M617.4 322.9 L620.6999999999999 326.1" stroke="#e8aa48" stroke-width="2.5" stroke-linecap="round"/><circle cx="614.55" cy="319.75" r="3.6" fill="url(#gm610316)" stroke="#5878b0" stroke-width="0.6"/></svg>
<div class="b" style="left:623px;top:313px;width:77px;height:17px;background:#fff;border:1px solid #c9cdd3;box-sizing:border-box;overflow:hidden;border-radius:1px">
</div>
<div class="t" style="left:394.41px;top:339px;font-size:10px;color:#404040;font-weight:normal;transform:scaleX(0.8897);">Idioma</div>
<svg class="b" style="left:446.3px;top:338px" width="14" height="14" viewBox="446.3 338 14 14"><defs><radialGradient id="gm447339" cx="0.45" cy="0.45" r="0.6"><stop offset="0" stop-color="#ffffff"/><stop offset="0.45" stop-color="#a8d0f4"/><stop offset="1" stop-color="#3a6cc4"/></radialGradient></defs><path d="M453.90000000000003 345.9 L457.2 349.1" stroke="#e8aa48" stroke-width="2.5" stroke-linecap="round"/><circle cx="451.05" cy="342.75" r="3.6" fill="url(#gm447339)" stroke="#5878b0" stroke-width="0.6"/></svg>
<div class="b" style="left:464px;top:336px;width:72px;height:16px;background:#fff;border:1px solid #c9cdd3;box-sizing:border-box;overflow:hidden;border-radius:1px">
<div class="t" style="left:1.20px;top:3px;font-size:10px;color:#2a2a2a;font-weight:normal;transform:scaleX(0.8891);">es | Español</div>
</div>
<div class="t" style="left:539.40px;top:339px;font-size:10px;color:#404040;font-weight:normal;transform:scaleX(0.7964);">Skype</div>
<div class="b" style="left:623px;top:335px;width:54px;height:17px;background:#fff;border:1px solid #c9cdd3;box-sizing:border-box;overflow:hidden;border-radius:1px">
</div>
<div class="b" style="left:681px;top:334px;width:19px;height:18px;background:#e8eaee;border:1px solid #8a8a8a;box-sizing:border-box"></div>
<svg class="b" style="left:681px;top:334px" width="19" height="18" viewBox="681 334 19 18"><path d="M690.5 337.6 C693.8 337.6 696.2 340 696.2 343.2 C696.2 344 696 344.6 695.8 345.2 C696.2 345.6 696.4 346.2 696.4 346.8 C696.4 348 695.4 349 694.2 349 C693.6 349 693 348.8 692.6 348.4 C692 348.6 691.2 348.8 690.5 348.8 C687.3 348.8 684.9 346.4 684.9 343.2 C684.9 342.5 685 341.8 685.2 341.2 C684.8 340.8 684.6 340.2 684.6 339.6 C684.6 338.4 685.6 337.4 686.8 337.4 C687.4 337.4 688 337.6 688.4 338 C689 337.8 689.8 337.6 690.5 337.6Z" fill="#1aa3e6"/><text x="690.6" y="346.6" font-size="8.6" font-weight="bold" text-anchor="middle" fill="#fff" font-family="Liberation Sans">S</text></svg>
<div class="t" style="left:395.30px;top:361px;font-size:10px;color:#404040;font-weight:normal;transform:scaleX(0.8512);">Teléfonos</div>
<div class="b" style="left:464px;top:356px;width:72px;height:18px;background:#fff;border:1px solid #c9cdd3;box-sizing:border-box;overflow:hidden;border-radius:1px">
<div class="t" style="left:1.20px;top:3px;font-size:10px;color:#2a2a2a;font-weight:normal;transform:scaleX(0.9429);">03822-460225 /</div>
</div>
<div class="t" style="left:539.40px;top:361px;font-size:10px;color:#404040;font-weight:normal;transform:scaleX(0.8879);">Horario</div>
<div class="b" style="left:623px;top:357px;width:77px;height:17px;background:#fff;border:1px solid #c9cdd3;box-sizing:border-box;overflow:hidden;border-radius:1px">
</div>
<div class="t" style="left:395.30px;top:384px;font-size:10px;color:#404040;font-weight:normal;transform:scaleX(0.9348);">Móvil</div>
<div class="b" style="left:464px;top:379px;width:72px;height:17px;background:#fff;border:1px solid #c9cdd3;box-sizing:border-box;overflow:hidden;border-radius:1px">
</div>
<div class="t" style="left:539.40px;top:384px;font-size:10px;color:#404040;font-weight:normal;transform:scaleX(0.8371);">Sección</div>
<svg class="b" style="left:609.8px;top:382.5px" width="14" height="14" viewBox="609.8 382.5 14 14"><defs><radialGradient id="gm610383" cx="0.45" cy="0.45" r="0.6"><stop offset="0" stop-color="#ffffff"/><stop offset="0.45" stop-color="#a8d0f4"/><stop offset="1" stop-color="#3a6cc4"/></radialGradient></defs><path d="M617.4 390.4 L620.6999999999999 393.6" stroke="#e8aa48" stroke-width="2.5" stroke-linecap="round"/><circle cx="614.55" cy="387.25" r="3.6" fill="url(#gm610383)" stroke="#5878b0" stroke-width="0.6"/></svg>
<div class="b" style="left:623px;top:379px;width:77px;height:17px;background:#fff;border:1px solid #c9cdd3;box-sizing:border-box;overflow:hidden;border-radius:1px">
<div class="t" style="left:1.80px;top:3px;font-size:10px;color:#2a2a2a;font-weight:normal;transform:scaleX(0.7611);">SECCTEST | Descip</div>
</div>
<div class="t" style="left:395.30px;top:406px;font-size:10px;color:#404040;font-weight:normal;transform:scaleX(0.7412);">Fax</div>
<div class="b" style="left:464px;top:402px;width:72px;height:17px;background:#fff;border:1px solid #c9cdd3;box-sizing:border-box;overflow:hidden;border-radius:1px">
</div>
<div class="t" style="left:539.40px;top:406px;font-size:10px;color:#404040;font-weight:normal;transform:scaleX(0.8657);">División</div>
<svg class="b" style="left:609.8px;top:404.8px" width="14" height="14" viewBox="609.8 404.8 14 14"><defs><radialGradient id="gm610405" cx="0.45" cy="0.45" r="0.6"><stop offset="0" stop-color="#ffffff"/><stop offset="0.45" stop-color="#a8d0f4"/><stop offset="1" stop-color="#3a6cc4"/></radialGradient></defs><path d="M617.4 412.7 L620.6999999999999 415.90000000000003" stroke="#e8aa48" stroke-width="2.5" stroke-linecap="round"/><circle cx="614.55" cy="409.55" r="3.6" fill="url(#gm610405)" stroke="#5878b0" stroke-width="0.6"/></svg>
<div class="b" style="left:623px;top:402px;width:77px;height:17px;background:#fff;border:1px solid #c9cdd3;box-sizing:border-box;overflow:hidden;border-radius:1px">
</div>
<div class="t" style="left:395.30px;top:428px;font-size:10px;color:#404040;font-weight:normal;transform:scaleX(0.8850);">Web</div>
<div class="b" style="left:464px;top:425px;width:214px;height:17px;background:#fff;border:1px solid #c9cdd3;box-sizing:border-box;overflow:hidden;border-radius:1px">
</div>
<div class="b" style="left:681px;top:425px;width:19px;height:17px;background:#e6e8ec;border:1px solid #d4d6da;box-sizing:border-box"></div>
<div class="t" style="left:395.30px;top:453px;font-size:10px;color:#404040;font-weight:normal;transform:scaleX(0.8750);">Moneda</div>
<svg class="b" style="left:450px;top:449.8px" width="14" height="14" viewBox="450 449.8 14 14"><defs><radialGradient id="gm451450" cx="0.45" cy="0.45" r="0.6"><stop offset="0" stop-color="#ffffff"/><stop offset="0.45" stop-color="#a8d0f4"/><stop offset="1" stop-color="#3a6cc4"/></radialGradient></defs><path d="M457.6 457.7 L460.9 460.90000000000003" stroke="#e8aa48" stroke-width="2.5" stroke-linecap="round"/><circle cx="454.75" cy="454.55" r="3.6" fill="url(#gm451450)" stroke="#5878b0" stroke-width="0.6"/></svg>
<div class="b" style="left:464px;top:447px;width:72px;height:17px;background:#fff;border:1px solid #c9cdd3;box-sizing:border-box;overflow:hidden;border-radius:1px">
<div class="t" style="left:1.50px;top:4px;font-size:10px;color:#2a2a2a;font-weight:normal;transform:scaleX(0.8500);">EUR | Moneda de</div>
</div>
<div class="t" style="left:540.30px;top:453px;font-size:10px;color:#404040;font-weight:normal;transform:scaleX(0.8315);">Forma pago</div>
<svg class="b" style="left:609.8px;top:450px" width="14" height="14" viewBox="609.8 450 14 14"><defs><radialGradient id="gm610451" cx="0.45" cy="0.45" r="0.6"><stop offset="0" stop-color="#ffffff"/><stop offset="0.45" stop-color="#a8d0f4"/><stop offset="1" stop-color="#3a6cc4"/></radialGradient></defs><path d="M617.4 457.9 L620.6999999999999 461.1" stroke="#e8aa48" stroke-width="2.5" stroke-linecap="round"/><circle cx="614.55" cy="454.75" r="3.6" fill="url(#gm610451)" stroke="#5878b0" stroke-width="0.6"/></svg>
<div class="b" style="left:623px;top:448px;width:76px;height:16px;background:#fff;border:1px solid #c9cdd3;box-sizing:border-box;overflow:hidden;border-radius:1px">
</div>
<div class="t" style="left:395.30px;top:473px;font-size:10px;color:#404040;font-weight:normal;transform:scaleX(0.8333);">Dia pago 1</div>
<div class="b" style="left:464px;top:469px;width:26px;height:15px;background:#fff;border:1px solid #c4d4e8;box-sizing:border-box;overflow:hidden;border-radius:1px">
<div class="t" style="left:17.80px;top:3px;font-size:10px;color:#2a2a2a;font-weight:normal;transform:scaleX(0.8500);">0</div>
</div>
<div class="t" style="left:497.10px;top:473px;font-size:10px;color:#404040;font-weight:normal;transform:scaleX(0.8312);">Dia pago 2</div>
<div class="b" style="left:572px;top:468px;width:26px;height:16px;background:#fff;border:1px solid #c4d4e8;box-sizing:border-box;overflow:hidden;border-radius:1px">
<div class="t" style="left:17.90px;top:4px;font-size:10px;color:#2a2a2a;font-weight:normal;transform:scaleX(0.8500);">0</div>
</div>
<div class="t" style="left:604.70px;top:473px;font-size:10px;color:#404040;font-weight:normal;transform:scaleX(0.8354);">Dia pago 3</div>
<div class="b" style="left:673px;top:468px;width:26px;height:16px;background:#fff;border:1px solid #c4d4e8;box-sizing:border-box;overflow:hidden;border-radius:1px">
<div class="t" style="left:18.10px;top:4px;font-size:10px;color:#2a2a2a;font-weight:normal;transform:scaleX(0.8500);">0</div>
</div>
<div class="t" style="left:395.30px;top:494px;font-size:10px;color:#404040;font-weight:normal;transform:scaleX(0.8324);">Precio especial</div>
<div class="b" style="left:464px;top:488px;width:72px;height:17px;background:#fff;border:1px solid #c4d4e8;box-sizing:border-box;overflow:hidden;border-radius:1px">
<div class="t" style="left:50.90px;top:5px;font-size:10px;color:#2a2a2a;font-weight:normal;transform:scaleX(0.8600);">0,00</div>
</div>
<div class="t" style="left:540.30px;top:494px;font-size:10px;color:#404040;font-weight:normal;transform:scaleX(0.8364);">Entrega en mano</div>
<div class="b" style="left:623px;top:488px;width:76px;height:17px;background:#fff;border:1px solid #c9cdd3;box-sizing:border-box;overflow:hidden;border-radius:1px">
</div>
<div class="t" style="left:394.47px;top:513px;font-size:10px;color:#404040;font-weight:normal;transform:scaleX(0.8308);">Id. Fiscal</div>
<div class="b" style="left:464px;top:509px;width:72px;height:16px;background:#fff;border:1px solid #c9cdd3;box-sizing:border-box;overflow:hidden;border-radius:1px">
</div>
<div class="t" style="left:395.30px;top:534px;font-size:10px;color:#404040;font-weight:normal;transform:scaleX(0.8651);">Núm. Ext.</div>
<div class="b" style="left:464px;top:530px;width:72px;height:16px;background:#fff;border:1px solid #c9cdd3;box-sizing:border-box;overflow:hidden;border-radius:1px">
</div>
<div class="b" style="left:541px;top:511px;width:11px;height:11px;background:#fff;border:1px solid #8a8a8a;box-sizing:border-box"></div>
<div class="t" style="left:556.00px;top:512px;font-size:10px;color:#404040;font-weight:normal;transform:scaleX(0.8567);">No enviar correspondencia</div>
<div class="b" style="left:541px;top:524px;width:11px;height:11px;background:#fff;border:1px solid #8a8a8a;box-sizing:border-box"></div>
<div class="t" style="left:556.00px;top:524px;font-size:10px;color:#404040;font-weight:normal;transform:scaleX(0.8609);">No enviar por email</div>
<div class="b" style="left:541px;top:535px;width:11px;height:11px;background:#fff;border:1px solid #8a8a8a;box-sizing:border-box"></div>
<div class="t" style="left:556.00px;top:536px;font-size:10px;color:#404040;font-weight:normal;transform:scaleX(0.8000);">Reverse Charge</div>
<div class="b" style="left:386px;top:307px;width:160px;height:29px;border:3px solid #e3161e;box-sizing:border-box"></div>
</body></html>
